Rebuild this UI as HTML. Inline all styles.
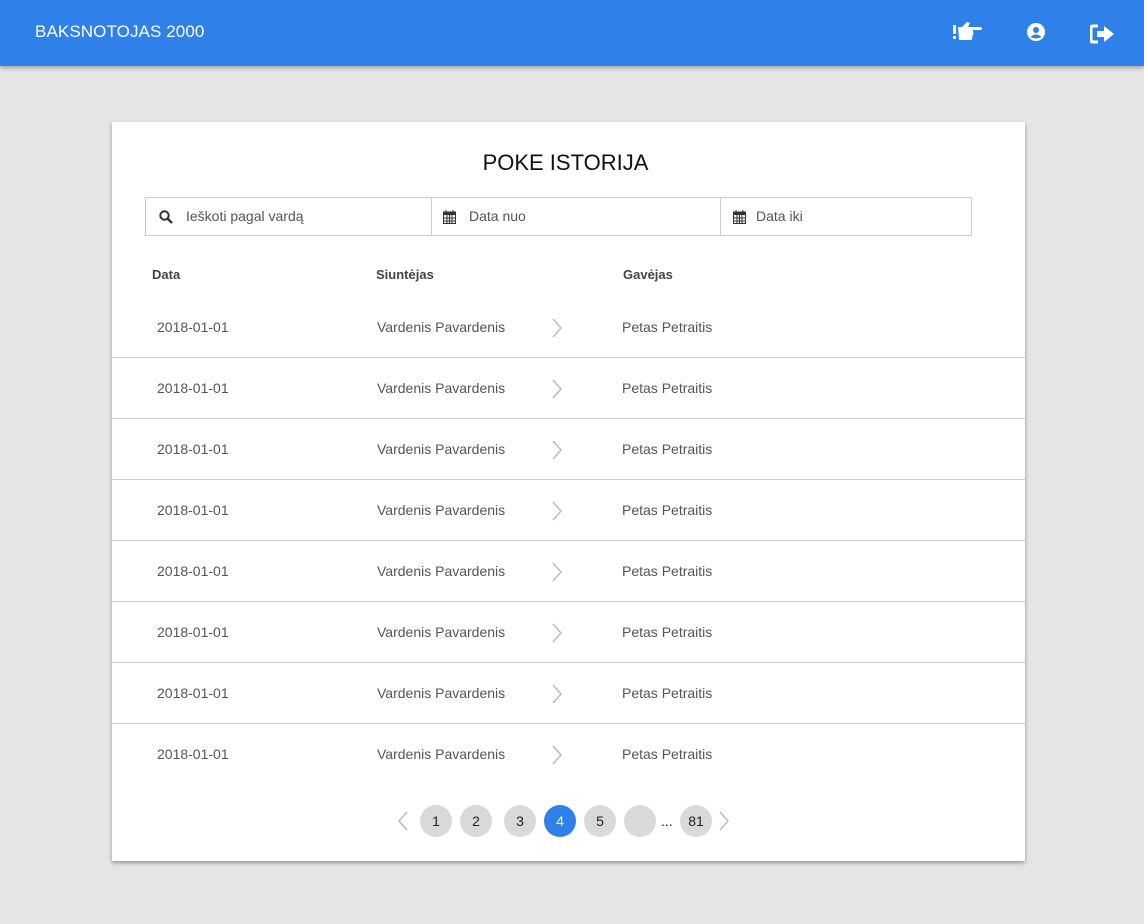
<!DOCTYPE html>
<html><head><meta charset="utf-8"><style>
*{margin:0;padding:0;box-sizing:border-box}
body{width:1144px;height:924px;background:#e5e5e5;font-family:"Liberation Sans",sans-serif;position:relative;overflow:hidden}
.hdr{position:absolute;left:0;top:0;width:1144px;height:66px;background:#2f80e8;box-shadow:0 2px 4px rgba(0,0,0,.3)}
.hdr .t{position:absolute;left:35px;top:22px;color:#fff;font-size:17px;letter-spacing:.1px}
.card{position:absolute;left:112px;top:122px;width:913px;height:739px;background:#fff;box-shadow:0 2px 4px rgba(0,0,0,.35)}
.title{position:absolute;left:0;width:913px;top:28px;text-align:center;font-size:22px;color:#111;padding-right:6px}
.filt{position:absolute;top:75px;height:39px;border:1px solid #ccc;font-size:14px;color:#555}
.filt span{position:absolute;top:10px}
.filt svg{position:absolute;top:12px}
.th{position:absolute;top:145px;font-size:13px;font-weight:bold;color:#444}
.row{position:absolute;left:0;width:913px;height:61px;border-bottom:1px solid #ccc;font-size:14px;color:#555}
.row span{position:absolute;top:22px}
.row svg{position:absolute;left:440px;top:21px}
.pg{position:absolute;top:683px;width:32px;height:32px;border-radius:50%;background:#d9d9d9;font-size:14px;color:#222;text-align:center;line-height:32px}
</style></head><body>
<div class="hdr"><div class="t">BAKSNOTOJAS 2000</div>
<svg style="position:absolute;left:953px;top:21px" width="30" height="22" viewBox="0 0 30 22"><rect x="0" y="4" width="3" height="9" fill="#fff"/><rect x="0" y="15" width="3" height="3" fill="#fff"/><path d="M5 6 L9 6 L14 1 L17 2 L15 6 L28 6 Q30 8 28 9 L20 9 L20 11 Q21 13 20 14 L19 16 Q20 18 18 19 L6 19 Z" fill="#fff"/></svg>
<svg style="position:absolute;left:1027px;top:23px" width="18" height="18" viewBox="0 0 18 18"><circle cx="9" cy="9" r="9" fill="#fff"/><circle cx="9" cy="7" r="3" fill="#2f80e8"/><path d="M3.5 14 Q9 9 14.5 14 Q9 17 3.5 14Z" fill="#2f80e8"/></svg>
<svg style="position:absolute;left:1090px;top:24px" width="26" height="20" viewBox="0 0 26 20"><path d="M8 2 H3 Q1 2 1 4 V16 Q1 18 3 18 H8" stroke="#fff" stroke-width="3" fill="none"/><path d="M7 7 H14 V2 L24 10 L14 18 V13 H7 Z" fill="#fff"/></svg>
</div>
<div class="card">
<div class="title">POKE ISTORIJA</div>
<div class="filt" style="left:33px;width:287px"><svg style="left:13px" width="14" height="14" viewBox="0 0 14 14"><circle cx="5.5" cy="5.5" r="4.2" stroke="#333" stroke-width="2" fill="none"/><path d="M8.5 8.5 L13 13" stroke="#333" stroke-width="2.4"/></svg><span style="left:40px">Ieškoti pagal vardą</span></div>
<div class="filt" style="left:319px;width:290px"><svg style="left:11px" width="13" height="14" viewBox="0 0 13 14"><rect x=".5" y="2" width="12" height="11.5" fill="none" stroke="#333"/><rect x=".5" y="2" width="12" height="3" fill="#333"/><path d="M3 0v3M10 0v3M.5 8h12M.5 11h12M4 5v9M6.5 5v9M9 5v9" stroke="#333"/></svg><span style="left:37px">Data nuo</span></div>
<div class="filt" style="left:608px;width:252px"><svg style="left:12px" width="13" height="14" viewBox="0 0 13 14"><rect x=".5" y="2" width="12" height="11.5" fill="none" stroke="#333"/><rect x=".5" y="2" width="12" height="3" fill="#333"/><path d="M3 0v3M10 0v3M.5 8h12M.5 11h12M4 5v9M6.5 5v9M9 5v9" stroke="#333"/></svg><span style="left:35px">Data iki</span></div>
<div class="th" style="left:40px">Data</div>
<div class="th" style="left:264px">Siuntėjas</div>
<div class="th" style="left:511px">Gavėjas</div>
<div class="row" style="top:175px"><span style="left:45px">2018-01-01</span><span style="left:265px">Vardenis Pavardenis</span><svg width="10" height="20" viewBox="0 0 10 20"><path d="M1 1 L9 10 L1 19" stroke="#bbb" stroke-width="1.5" fill="none"/></svg><span style="left:510px">Petas Petraitis</span></div>
<div class="row" style="top:236px"><span style="left:45px">2018-01-01</span><span style="left:265px">Vardenis Pavardenis</span><svg width="10" height="20" viewBox="0 0 10 20"><path d="M1 1 L9 10 L1 19" stroke="#bbb" stroke-width="1.5" fill="none"/></svg><span style="left:510px">Petas Petraitis</span></div>
<div class="row" style="top:297px"><span style="left:45px">2018-01-01</span><span style="left:265px">Vardenis Pavardenis</span><svg width="10" height="20" viewBox="0 0 10 20"><path d="M1 1 L9 10 L1 19" stroke="#bbb" stroke-width="1.5" fill="none"/></svg><span style="left:510px">Petas Petraitis</span></div>
<div class="row" style="top:358px"><span style="left:45px">2018-01-01</span><span style="left:265px">Vardenis Pavardenis</span><svg width="10" height="20" viewBox="0 0 10 20"><path d="M1 1 L9 10 L1 19" stroke="#bbb" stroke-width="1.5" fill="none"/></svg><span style="left:510px">Petas Petraitis</span></div>
<div class="row" style="top:419px"><span style="left:45px">2018-01-01</span><span style="left:265px">Vardenis Pavardenis</span><svg width="10" height="20" viewBox="0 0 10 20"><path d="M1 1 L9 10 L1 19" stroke="#bbb" stroke-width="1.5" fill="none"/></svg><span style="left:510px">Petas Petraitis</span></div>
<div class="row" style="top:480px"><span style="left:45px">2018-01-01</span><span style="left:265px">Vardenis Pavardenis</span><svg width="10" height="20" viewBox="0 0 10 20"><path d="M1 1 L9 10 L1 19" stroke="#bbb" stroke-width="1.5" fill="none"/></svg><span style="left:510px">Petas Petraitis</span></div>
<div class="row" style="top:541px"><span style="left:45px">2018-01-01</span><span style="left:265px">Vardenis Pavardenis</span><svg width="10" height="20" viewBox="0 0 10 20"><path d="M1 1 L9 10 L1 19" stroke="#bbb" stroke-width="1.5" fill="none"/></svg><span style="left:510px">Petas Petraitis</span></div>
<div class="row" style="top:602px;border-bottom:none"><span style="left:45px">2018-01-01</span><span style="left:265px">Vardenis Pavardenis</span><svg width="10" height="20" viewBox="0 0 10 20"><path d="M1 1 L9 10 L1 19" stroke="#bbb" stroke-width="1.5" fill="none"/></svg><span style="left:510px">Petas Petraitis</span></div>
<svg style="position:absolute;left:286px;top:689px" width="10" height="20" viewBox="0 0 10 20"><path d="M9 1 L1 10 L9 19" stroke="#bbb" stroke-width="1.5" fill="none"/></svg>
<div class="pg" style="left:308px">1</div>
<div class="pg" style="left:348px">2</div>
<div class="pg" style="left:392px">3</div>
<div class="pg" style="left:432px;background:#2f80e8;color:#fff">4</div>
<div class="pg" style="left:472px">5</div>
<div class="pg" style="left:512px"></div>
<div style="position:absolute;left:549px;top:691px;font-size:14px;color:#222">...</div>
<div class="pg" style="left:568px">81</div>
<svg style="position:absolute;left:607px;top:689px" width="10" height="20" viewBox="0 0 10 20"><path d="M1 1 L9 10 L1 19" stroke="#bbb" stroke-width="1.5" fill="none"/></svg>
</div>
</body></html>
